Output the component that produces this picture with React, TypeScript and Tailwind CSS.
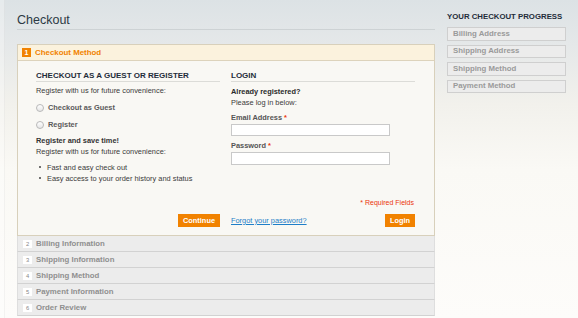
import React from "react";

const Radio = () => (
  <span className="inline-block w-[8px] h-[8px] rounded-full border border-[#b9b9b9] bg-[linear-gradient(to_bottom,#ffffff,#e6e6e6)] shrink-0" />
);

const Req = () => <span className="text-[#eb340a] ml-[2px]">*</span>;

const rows = [
  ["2", "Billing Information"],
  ["3", "Shipping Information"],
  ["4", "Shipping Method"],
  ["5", "Payment Information"],
  ["6", "Order Review"],
];

const progress = ["Billing Address", "Shipping Address", "Shipping Method", "Payment Method"];

export default function App() {
  return (
    <div className="w-[578px] h-[318px] overflow-hidden flex font-['Liberation_Sans',Arial,sans-serif] bg-[linear-gradient(to_bottom,#dce2e5_0px,#e5e8e9_45px,#f2f1ec_105px,#faf9f5_170px,#fdfcfa_318px)]">
      <div className="w-[5px] h-full bg-white/30 border-r border-black/[0.04]" />
      <div className="w-[418px] ml-[12px] flex flex-col">
        <div className="pt-[13px] pb-[2px] border-b border-[#cdd2d4] text-[12.5px] leading-[14px] text-[#2c3944]">
          Checkout
        </div>
        <div className="mt-[14px] border border-[#d8d0bb]">
          <div className="h-[16px] bg-[#fbf2dd] border-b border-[#ddd3bc] flex items-center pl-[4px]">
            <span className="w-[9px] h-[9px] bg-[#f18200] text-white text-[7px] font-bold leading-[9px] flex items-center justify-center">1</span>
            <span className="ml-[4px] text-[#f18200] font-bold text-[7.9px] leading-[10px]">Checkout Method</span>
          </div>
          <div className="h-[174px] bg-[#f9f8f4] pl-[18px] pr-[19px] pb-[8px] flex gap-[11px]">
            <div className="w-[184px] flex flex-col">
              <div className="pt-[10px] border-b border-[#dcdcd8] text-[8px] leading-[10px] font-bold text-[#1f2d3a] uppercase">
                Checkout as a Guest or Register
              </div>
              <div className="mt-[4px] text-[7.4px] leading-[10px] text-[#3a3a3a]">Register with us for future convenience:</div>
              <div className="mt-[7px] flex items-center h-[10px] gap-[4px] text-[7.4px] font-bold text-[#5a5a5a]">
                <Radio />
                <span>Checkout as Guest</span>
              </div>
              <div className="mt-[6.5px] flex items-center h-[10px] gap-[4px] text-[7.4px] font-bold text-[#5a5a5a]">
                <Radio />
                <span>Register</span>
              </div>
              <div className="mt-[5px] text-[7.4px] leading-[11px] font-bold text-[#333]">Register and save time!</div>
              <div className="text-[7.4px] leading-[11px] text-[#3a3a3a]">Register with us for future convenience:</div>
              <ul className="mt-[5px] text-[7.4px] leading-[11.3px] text-[#3a3a3a]">
                <li className="flex items-center">
                  <span className="ml-[3px] w-[2px] h-[2px] rounded-full bg-[#444]" />
                  <span className="ml-[6px]">Fast and easy check out</span>
                </li>
                <li className="flex items-center">
                  <span className="ml-[3px] w-[2px] h-[2px] rounded-full bg-[#444]" />
                  <span className="ml-[6px]">Easy access to your order history and status</span>
                </li>
              </ul>
              <div className="mt-auto flex justify-end">
                <span className="h-[13px] w-[42px] bg-[#f18200] text-white font-bold text-[7.4px] flex items-center justify-center">Continue</span>
              </div>
            </div>
            <div className="w-[184px] flex flex-col">
              <div className="pt-[10px] border-b border-[#dcdcd8] text-[8px] leading-[10px] font-bold text-[#1f2d3a] uppercase">
                Login
              </div>
              <div className="mt-[4px] text-[7.4px] leading-[11px] font-bold text-[#2a2a2a]">Already registered?</div>
              <div className="text-[7.4px] leading-[11px] text-[#3a3a3a]">Please log in below:</div>
              <div className="mt-[5px] text-[7.4px] leading-[10px] font-bold text-[#555]">Email Address<Req /></div>
              <div className="mt-[1px] w-[159px] h-[12px] bg-white border border-[#c9c9c9]" />
              <div className="mt-[5px] text-[7.4px] leading-[10px] font-bold text-[#555]">Password<Req /></div>
              <div className="mt-[1px] w-[159px] h-[12.5px] bg-white border border-[#c9c9c9]" />
              <div className="mt-auto flex flex-col">
                <div className="text-right text-[7px] leading-[10px] text-[#eb340a] pr-[1px]">* Required Fields</div>
                <div className="mt-[6px] flex items-center justify-between">
                  <span className="text-[7.4px] text-[#1e7ec8] underline">Forgot your password?</span>
                  <span className="h-[13px] w-[30px] bg-[#f18200] text-white font-bold text-[7.4px] flex items-center justify-center">Login</span>
                </div>
              </div>
            </div>
          </div>
        </div>
        <div className="flex flex-col">
          {rows.map(([n, label]) => (
            <div key={n} className="h-[16px] bg-[#ececec] border-b border-[#d2d2d2] border-x border-x-[#dedede] flex items-center pl-[5px]">
              <span className="w-[9px] h-[8px] bg-white text-[5.8px] leading-[8px] text-[#888] flex items-center justify-center">{n}</span>
              <span className="ml-[4px] text-[7.8px] font-bold text-[#8f8f8f]">{label}</span>
            </div>
          ))}
        </div>
      </div>
      <div className="ml-[12px] w-[119px] flex flex-col">
        <div className="pt-[12px] text-[7.8px] leading-[10px] font-bold text-[#1f2d3a]">YOUR CHECKOUT PROGRESS</div>
        <div className="mt-[5px] flex flex-col gap-[4px]">
          {progress.map((p) => (
            <div key={p} className="h-[13.5px] bg-[#ececec] border border-[#cfcfcf] flex items-center pl-[5px] text-[7.8px] font-bold text-[#9a9a9a]">
              {p}
            </div>
          ))}
        </div>
      </div>
    </div>
  );
}
